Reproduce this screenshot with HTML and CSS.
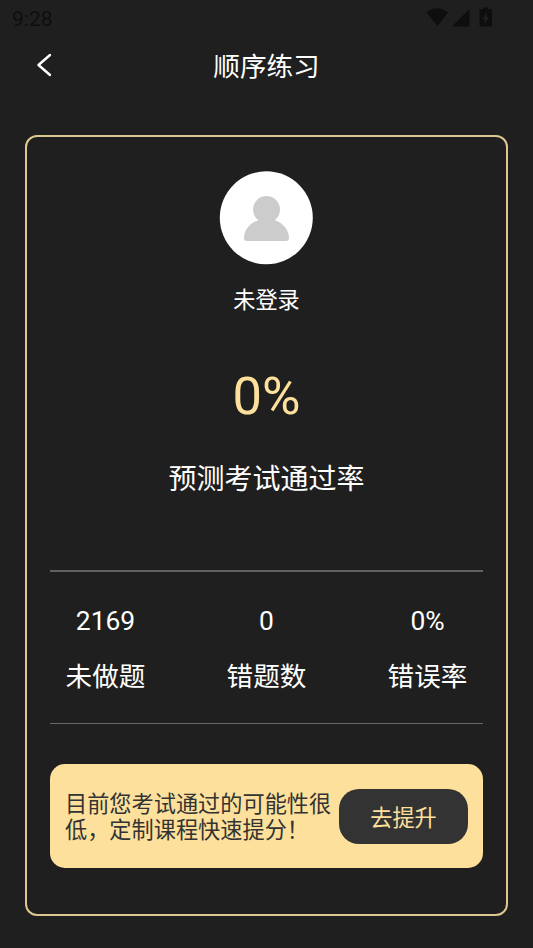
FILE: index.html
```html
<!DOCTYPE html>
<html lang="zh-CN">
<head>
<meta charset="utf-8">
<meta name="viewport" content="width=device-width, initial-scale=1">
<title>顺序练习</title>
<link rel="stylesheet" href="styles.css">
</head>
<body>
<div class="status-bar">
  <span class="clock">9:28</span>
  <svg class="status-icons" width="68" height="20" viewBox="0 0 68 20" aria-hidden="true">
    <path d="M.5 4.500Q11-4 22 4.500L11.500 18Z"/>
    <path d="M43.500 1V18.500H26Z"/>
    <path fill-rule="evenodd" d="M57 1V-.5H62V1H64.500Q66 1 66 2.500V17Q66 18.500 64.500 18.500H55Q53.500 18.500 53.500 17V2.500Q53.500 1 55 1ZM61 4L56.500 11H59L58.500 16L63 9H60.500Z"/>
  </svg>
</div>
<header class="nav">
  <svg class="back" width="16" height="24" viewBox="0 0 16 24" aria-label="返回"><path d="M14 2L2.500 12L14 22"/></svg>
  <h1>顺序练习</h1>
</header>
<main class="card">
  <svg class="avatar" width="95" height="94" viewBox="0 0 95 94" aria-hidden="true">
    <circle class="disc" cx="47.300" cy="46.800" r="46.500"/>
    <circle cx="47.500" cy="38.500" r="13.500"/>
    <path d="M40 49H55C65 52 70 60 70 67Q70 70 67 70H28Q25 70 25 67C25 60 30 52 40 49Z"/>
  </svg>
  <p class="user">未登录</p>
  <p class="rate">0%</p>
  <p class="rate-label">预测考试通过率</p>
  <section class="stats">
    <div class="stat"><span>2169</span><span class="label">未做题</span></div>
    <div class="stat"><span>0</span><span class="label">错题数</span></div>
    <div class="stat"><span>0%</span><span class="label">错误率</span></div>
  </section>
  <section class="promo">
    <p>目前您考试通过的可能性很低，定制课程快速提分！</p>
    <button type="button">去提升</button>
  </section>
</main>
</body>
</html>
```
FILE: styles.css
```css
* {
  box-sizing: border-box;
}

body {
  margin: 0;
  height: 948px;
  overflow: hidden;
  background: #1f1f1f;
  color: #fff;
  font-family: Roboto, "Noto Sans CJK SC", sans-serif;
}

h1,
p {
  margin: 0;
  font-weight: 400;
}

.status-bar {
  display: flex;
  justify-content: space-between;
  height: 37px;
  padding: 8px 39px 0 12px;
  color: #0e0e0e;
}

.clock {
  font-size: 21px;
  line-height: 23px;
}

.status-icons {
  overflow: visible;
  fill: #0e0e0e;
}

.nav {
  display: grid;
  grid-template-columns: 60px 1fr 60px;
  align-items: center;
  height: 56px;
}

.back {
  margin-left: 36px;
  fill: none;
  stroke: #fff;
  stroke-width: 2.4;
  stroke-linecap: round;
  stroke-linejoin: round;
}

.nav h1 {
  padding-top: 4px;
  font-size: 26.6px;
  line-height: 40px;
  text-align: center;
}

.card {
  display: flex;
  flex-direction: column;
  align-items: center;
  width: 483px;
  height: 781px;
  margin: 42px 0 0 25px;
  padding: 34px 23px 0;
  border: 2px solid #dcc78f;
  border-radius: 12px;
}

.avatar {
  fill: #ccc;
}

.disc {
  fill: #fff;
}

.user {
  margin-top: 18px;
  font-size: 22.2px;
  line-height: 34px;
}

.rate {
  margin-top: 46px;
  color: #fde09b;
  font-size: 52.5px;
  line-height: 66px;
}

.rate-label {
  margin-top: 30px;
  font-size: 28px;
  line-height: 42px;
}

.stats {
  display: flex;
  justify-content: space-between;
  width: 433px;
  height: 154px;
  margin-top: 69px;
  padding: 33px 15px 0;
  border-top: 2px solid #616161;
  border-bottom: 1px solid #686868;
}

.stat {
  display: flex;
  flex-direction: column;
  align-items: center;
  width: 81px;
  font-size: 26.4px;
  line-height: 32px;
}

.label {
  margin-top: 20px;
  font-size: 26.6px;
  line-height: 40px;
}

.promo {
  display: flex;
  align-items: center;
  gap: 7px;
  width: 433px;
  height: 104px;
  margin-top: 40px;
  padding: 0 15px;
  border-radius: 15px;
  background: #fde09b;
  color: #333;
}

.promo p {
  width: 267px;
  padding-top: 2px;
  font-size: 22.2px;
  line-height: 26px;
}

.promo button {
  width: 129px;
  height: 55px;
  padding: 0 0 1px;
  border: 0;
  border-radius: 20px;
  background: #333;
  color: #fde09b;
  font: inherit;
  font-size: 22.2px;
}
```
